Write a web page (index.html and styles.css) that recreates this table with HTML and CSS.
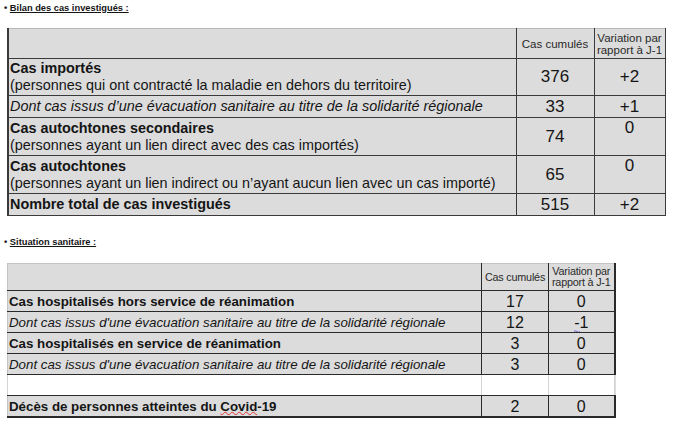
FILE: index.html
```html
<!DOCTYPE html>
<html lang="fr">
<head>
<meta charset="utf-8">
<link rel="stylesheet" href="styles.css">
</head>
<body>
<p class="title title-1"><span class="dot">•</span> <span class="u">Bilan des cas investigués :</span></p>
<table class="t1">
  <colgroup><col class="c1a"><col class="c1b"><col class="c1c"></colgroup>
  <tr class="head"><td class="lbl"></td><td class="hnum">Cas cumulés</td><td class="hnum">Variation par rapport à J-1</td></tr>
  <tr class="r2l"><td class="lbl"><b>Cas importés</b><br>(personnes qui ont contracté la maladie en dehors du territoire)</td><td class="num">376</td><td class="num">+2</td></tr>
  <tr class="r1l"><td class="lbl"><i>Dont cas issus d’une évacuation sanitaire au titre de la solidarité régionale</i></td><td class="num">33</td><td class="num">+1</td></tr>
  <tr class="r2l"><td class="lbl"><b>Cas autochtones secondaires</b><br>(personnes ayant un lien direct avec des cas importés)</td><td class="num">74</td><td class="num top">0</td></tr>
  <tr class="r2l"><td class="lbl"><b>Cas autochtones</b><br>(personnes ayant un lien indirect ou n’ayant aucun lien avec un cas importé)</td><td class="num">65</td><td class="num top">0</td></tr>
  <tr class="r1l"><td class="lbl"><b>Nombre total de cas investigués</b></td><td class="num">515</td><td class="num">+2</td></tr>
</table>

<p class="title title-2"><span class="dot">•</span> <span class="u">Situation sanitaire :</span></p>
<table class="t2">
  <colgroup><col class="c2a"><col class="c2b"><col class="c2c"></colgroup>
  <tr class="head"><td class="lbl"></td><td class="hnum">Cas cumulés</td><td class="hnum">Variation par rapport à J-1</td></tr>
  <tr><td class="lbl"><b>Cas hospitalisés hors service de réanimation</b></td><td class="num">17</td><td class="num">0</td></tr>
  <tr><td class="lbl"><i>Dont cas issus d'une évacuation sanitaire au titre de la solidarité régionale</i></td><td class="num">12</td><td class="num"><span class="wavy-blue">-<svg class="wave" width="6" height="3" viewBox="0 0 6 3"><path d="M0 1.5 Q1.5 0 3 1.5 T6 1.5" fill="none" stroke="#5a5ad0" stroke-width="0.9"/></svg></span>1</td></tr>
  <tr><td class="lbl"><b>Cas hospitalisés en service de réanimation</b></td><td class="num">3</td><td class="num">0</td></tr>
  <tr><td class="lbl"><i>Dont cas issus d'une évacuation sanitaire au titre de la solidarité régionale</i></td><td class="num">3</td><td class="num">0</td></tr>
  <tr class="blank"><td class="lbl"></td><td class="num"></td><td class="num"></td></tr>
  <tr class="last"><td class="lbl"><b>Décès de personnes atteintes du <span class="wavy-red">Covid</span>-19</b></td><td class="num">2</td><td class="num">0</td></tr>
</table>
</body>
</html>
```

FILE: styles.css
```css
html, body {
  margin: 0;
  padding: 0;
  background: #ffffff;
}
body {
  font-family: "Liberation Sans", Arial, sans-serif;
  color: #151515;
  padding: 0 0 0 4px;
}
.title {
  margin: 0;
  font-size: 9.3px;
  font-weight: bold;
  line-height: 11px;
}
.title-1 { padding-top: 3px; }
.title-2 { margin-top: 21px; }
.u { text-decoration: underline; }
.dot { font-weight: bold; }

table {
  border-collapse: collapse;
  table-layout: fixed;
  background: #dcdcdc;
}
td {
  padding: 0;
  border: 1px solid #3a3a3a;
  overflow: hidden;
}
.t1 {
  margin-left: 3px;
  margin-top: 14px;
  width: 657px;
}
.c1a { width: 508px; }
.c1b { width: 78px; }
.c1c { width: 71px; }
.t1 tr.head td { border-top-color: #b8b8b8; height: 28px; }
.t1 td:first-child { border-left: 2px solid #3a3a3a; }
.t1 td.lbl {
  font-size: 14.4px;
  line-height: 17px;
  padding-left: 1px;
  vertical-align: middle;
  white-space: nowrap;
}
.t1 tr.r2l td { height: 36px; }
.t1 tr.r1l td { height: 21px; }
.t1 td.num {
  text-align: center;
  font-size: 17px;
  line-height: 18px;
  vertical-align: middle;
}
.t1 td.num.top { vertical-align: top; padding-top: 1px; }
.t1 td.hnum {
  font-size: 11.5px;
  line-height: 12px;
  text-align: center;
  vertical-align: middle;
  color: #2a2a2a;
}
.t1 td.hnum:last-child { padding-top: 1px; }

.t2 {
  margin-left: 3px;
  margin-top: 15px;
  width: 607px;
}
.c2a { width: 474px; }
.c2b { width: 67px; }
.c2c { width: 66px; }
.t2 td { height: 20px; border-color: #2a2a2a; }
.t2 tr.head td { border-top-color: #c4c4c4; height: 26px; }
.t2 td:first-child { border-left-color: #c4c4c4; }
.t2 td:last-child { border-right: 2px solid #2a2a2a; }
.t2 td.lbl {
  font-size: 13.3px;
  line-height: 15px;
  padding-left: 1px;
  white-space: nowrap;
  vertical-align: middle;
}
.t2 td.num {
  text-align: center;
  font-size: 16px;
  line-height: 17px;
  vertical-align: middle;
}
.t2 td.hnum {
  font-size: 10.8px;
  line-height: 11px;
  text-align: center;
  vertical-align: middle;
  letter-spacing: -0.2px;
  color: #2a2a2a;
}
.t2 tr.blank td {
  background: #ffffff;
  border-left-color: #d4d4d4;
  border-right-color: #d4d4d4;
  border-right-width: 1px;
}
.t2 tr.last td:first-child { border-left-color: #c4c4c4; }
.t2 tr.last td { border-bottom: 2px solid #2a2a2a; }

.wavy-red {
  text-decoration: underline wavy #e03030;
  text-decoration-thickness: 1px;
  text-underline-offset: 0px;
  text-decoration-skip-ink: none;
}
.wavy-blue {
  position: relative;
}
.wave {
  position: absolute;
  left: 0;
  bottom: -2px;
  display: block;
}
```
